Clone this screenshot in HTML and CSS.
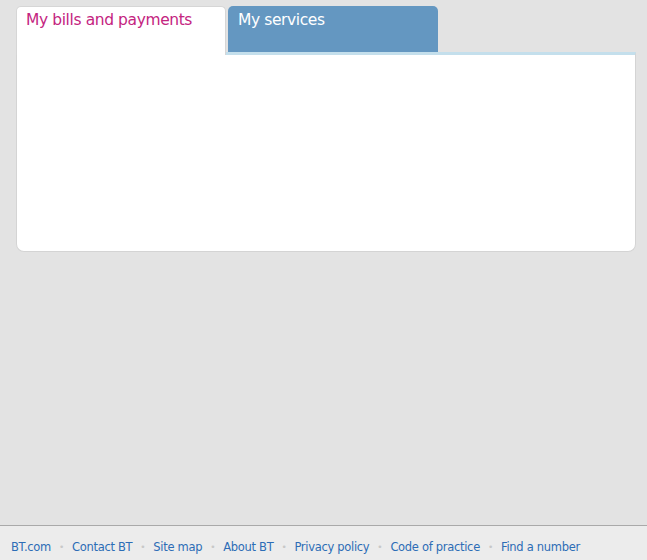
FILE: index.html
```html
<!DOCTYPE html>
<html lang="en">
<head>
<meta charset="utf-8"/>
<title>My BT</title>
<link rel="stylesheet" href="styles.css">
</head>
<body>
<div class="page">
  <!-- Вкладки -->
  <div class="tabs">
    <a class="tab tab-active" href="#">My bills and payments</a>
    <a class="tab" href="#">My services</a>
  </div>
  <div class="panel"></div>
</div>

<!-- Подвал -->
<div class="footer">
  <a href="#">BT.com</a><span class="dot">•</span>
  <a href="#">Contact BT</a><span class="dot">•</span>
  <a href="#">Site map</a><span class="dot">•</span>
  <a href="#">About BT</a><span class="dot">•</span>
  <a href="#">Privacy policy</a><span class="dot">•</span>
  <a href="#">Code of practice</a><span class="dot">•</span>
  <a href="#">Find a number</a>
</div>
</body>
</html>
```

FILE: styles.css
```css
html, body {
    height: 100%;
}

body {
    margin: 0;
    background: #e3e3e3;
    font-family: 'DejaVu Sans', Tahoma, Verdana, sans-serif;
    display: flex;
    flex-direction: column;
}

.page {
    width: 620px;
    padding: 6px 0 0 16px;
}

.tabs {
    display: flex;
    gap: 2px;
    height: 46px;
    position: relative;
    z-index: 1;
}

.tab {
    width: 210px;
    box-sizing: border-box;
    padding: 5px 10px 0;
    border-radius: 5px 5px 0 0;
    background: #6497c1;
    color: #fff;
    font-size: 15.5px;
    letter-spacing: -0.4px;
    text-decoration: none;
}

.tab-active {
    background: #fff;
    color: #c4247f;
    border: 1px solid #d6d6d6;
    border-bottom: none;
    height: 49px;
    padding: 4px 9px 0;
}

.panel {
    height: 196px;
    background: #fff;
    border: 1px solid #d4d4d4;
    border-top: 3px solid #c4dfec;
    border-radius: 0 0 8px 8px;
}

.footer {
    margin-top: auto;
    height: 35px;
    box-sizing: border-box;
    border-top: 1px solid #a9a9a9;
    background: #ececec;
    padding: 14px 0 0 11px;
    display: flex;
    align-items: flex-start;
    font-size: 11.5px;
    letter-spacing: -0.3px;
}

.footer a {
    color: #2d6db6;
    text-decoration: none;
}

.dot {
    color: #c8c8c8;
    font-size: 9px;
    margin: 2px 8px 0;
}
```
